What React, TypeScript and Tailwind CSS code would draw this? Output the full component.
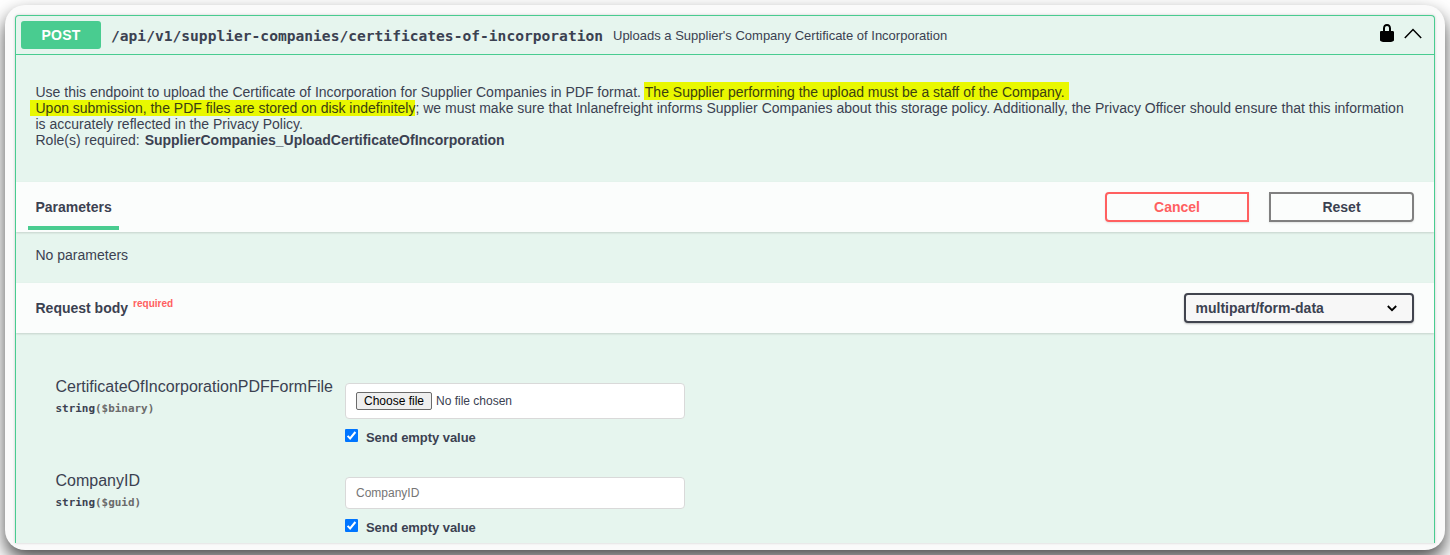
import type { ReactNode } from 'react';

function SectionHeader({ children }: { children: ReactNode }) {
  return (
    <div className="relative flex h-[50px] shrink-0 items-center justify-between bg-[#fbfdfc] pr-5 pl-[19.5px] shadow-[0_1px_2px_rgba(0,0,0,0.15)]">
      {children}
    </div>
  );
}

function Check() {
  return (
    <svg width="13" height="13" viewBox="0 0 13 13" className="shrink-0">
      <rect width="13" height="13" rx="1" fill="#0075ff" />
      <path d="M2.6 6.9 5.1 9.4 10.4 3" fill="none" stroke="#fff" strokeWidth="2" />
    </svg>
  );
}

function SendEmpty() {
  return (
    <label className="flex h-4 items-start text-[13px] leading-[16px] font-bold">
      <Check />
      <span className="mt-px ml-2 tracking-[-0.05px] whitespace-nowrap">Send empty value</span>
    </label>
  );
}

function FieldName({ name, format }: { name: string; format: string }) {
  return (
    <div className="w-[289.5px] shrink-0 pt-px whitespace-nowrap">
      <div className="text-[16px] leading-[20px]">{name}</div>
      <div className="mt-[5px] font-['DejaVu_Sans_Mono',monospace] text-[10.95px] leading-[14px] font-bold">
        string<span className="text-[#6b6b6b]">(${format})</span>
      </div>
    </div>
  );
}

export default function App() {
  return (
    <div className="h-[555px] w-[1450px] overflow-hidden bg-white p-[5px] font-['Liberation_Sans',Arial,sans-serif] text-[14px] text-[#3b4151]">
      <div className="h-[545px] rounded-[20px] bg-[#fafafa] px-[10px] pt-[10px] shadow-[0_9px_18px_rgba(0,0,0,0.7)]">
        <div className="flex h-[528px] flex-col overflow-hidden rounded-t-[4px] border border-b-0 border-[#49cc90] bg-[#e6f5ee] shadow-[0_0_3px_rgba(0,0,0,0.19)]">
          <div className="flex h-[39px] shrink-0 items-center border-b border-[#49cc90] pr-[11px] pl-[5px]">
            <div className="flex h-7 w-20 items-center justify-center rounded-[3px] bg-[#49cc90] font-bold tracking-[0.2px] text-white">POST</div>
            <div className="ml-[10px] w-[493px] pt-px font-['DejaVu_Sans_Mono',monospace] text-[14.6px] leading-5 font-bold whitespace-nowrap">
              /api/v1/supplier-companies/certificates-of-incorporation
            </div>
            <div className="ml-[9px] flex-1 pt-[2px] text-[13px] whitespace-nowrap">Uploads a Supplier's Company Certificate of Incorporation</div>
            <svg width="20" height="20" viewBox="0 0 20 20" fill="#000" className="mb-[4px]">
              <path d="M15.8 8H14V5.6C14 2.703 12.665 1 10 1 7.334 1 6 2.703 6 5.6V8H4c-.553 0-1 .646-1 1.199V17c0 .549.428 1.139.951 1.307l1.197.387C5.672 18.861 6.55 19 7.1 19h5.8c.549 0 1.428-.139 1.951-.307l1.196-.387c.524-.167.953-.757.953-1.306V9.199C17 8.646 16.352 8 15.8 8zM12 8H8V5.199C8 3.754 8.797 3 10 3c1.203 0 2 .754 2 2.199V8z" />
            </svg>
            <svg width="20" height="20" viewBox="0 0 20 20" className="mb-[4px] ml-[6px]">
              <path d="M1.8 15 10 6.6 18.2 15" fill="none" stroke="#000" strokeWidth="1.5" />
            </svg>
          </div>

          <div className="h-[127px] shrink-0 pt-[29px] pl-[19.5px] leading-[16px] whitespace-nowrap">
            <div>
              Use this endpoint to upload the Certificate of Incorporation for Supplier Companies in PDF format.{' '}
              <span className="-ml-px bg-[#e9f800] pt-[2px] pr-[4px] pl-px tracking-[-0.01px] text-[#3b4110]">The Supplier performing the upload must be a staff of the Company.</span>
            </div>
            <div>
              <span className="-ml-[6px] bg-[#e9f800] pl-[6px] tracking-[-0.01px] text-[#3b4110]">Upon submission, the PDF files are stored on disk indefinitely</span>
              ; we must make sure that Inlanefreight informs Supplier Companies about this storage policy. Additionally, the Privacy Officer should ensure that this information
            </div>
            <div>is accurately reflected in the Privacy Policy.</div>
            <div>
              Role(s) required: <b className="ml-px tracking-[-0.02px]">SupplierCompanies_UploadCertificateOfIncorporation</b>
            </div>
          </div>

          <SectionHeader>
            <div className="-ml-[7.5px] flex h-full w-[91px] flex-col justify-between pb-[2px]">
              <span className="pt-[15px] pl-[7.5px] leading-5 font-bold">Parameters</span>
              <span className="h-1 bg-[#49cc90]" />
            </div>
            <div className="flex gap-5">
              <button className="h-[30px] w-36 rounded-l-[4px] border-2 border-[#ff6060] font-bold text-[#ff6060] shadow-[0_1px_2px_rgba(0,0,0,0.1)]">Cancel</button>
              <button className="h-[30px] w-[145px] rounded-r-[4px] border-2 border-[#808080] font-bold shadow-[0_1px_2px_rgba(0,0,0,0.1)]">Reset</button>
            </div>
          </SectionHeader>

          <div className="h-[51px] shrink-0 pt-[13px] pl-[19.5px] leading-5">No parameters</div>

          <SectionHeader>
            <div className="flex leading-5 font-bold">
              Request body
              <span className="-mt-[4px] ml-[5px] text-[10px] text-[#ff6060]">required</span>
            </div>
            <div className="flex h-[30px] w-[230px] items-center justify-between rounded-[4px] border-2 border-[#41444e] bg-[#f7f7f7] pr-[15px] pl-[9.5px] font-bold shadow-[0_1px_2px_rgba(0,0,0,0.25)]">
              multipart/form-data
              <svg width="10" height="7" viewBox="0 0 10 7">
                <path d="M.8 1 5 5.2 9.2 1" fill="none" stroke="#000" strokeWidth="1.8" />
              </svg>
            </div>
          </SectionHeader>

          <div className="flex flex-col pt-[43px] pl-[39.5px]">
            <div className="flex h-[94px]">
              <FieldName name="CertificateOfIncorporationPDFFormFile" format="binary" />
              <div className="pt-[7px]">
                <div className="flex h-9 w-[340px] items-center rounded-[4px] border border-[#d9d9d9] bg-white pl-[10px] text-[12px]">
                  <span className="flex h-[18px] w-[76px] items-center justify-center rounded-[2px] border border-[#6b6b6b] bg-[#efefef] text-black">Choose file</span>
                  <span className="ml-1">No file chosen</span>
                </div>
                <div className="mt-[10px]"><SendEmpty /></div>
              </div>
            </div>
            <div className="flex">
              <FieldName name="CompanyID" format="guid" />
              <div className="pt-[7px]">
                <div className="flex h-8 w-[340px] items-center rounded-[4px] border border-[#d9d9d9] bg-white pl-[10px] text-[12px] text-[#757575]">CompanyID</div>
                <div className="mt-[10px]"><SendEmpty /></div>
              </div>
            </div>
          </div>
        </div>
      </div>
    </div>
  );
}
